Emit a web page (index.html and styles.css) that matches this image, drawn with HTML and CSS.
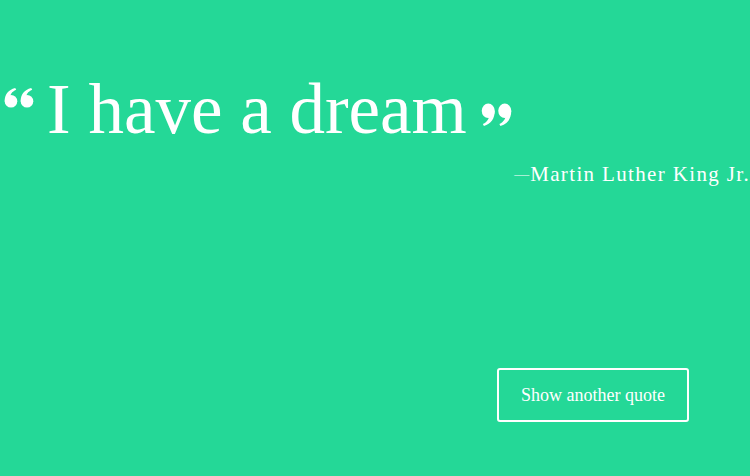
FILE: index.html
```html
<!DOCTYPE html>
<html lang="en">
<head>
<meta charset="utf-8">
<title>Random Quote</title>
<link rel="stylesheet" href="styles.css">
</head>
<body>
<main class="quote-box">
  <h1 class="quote">
    <svg class="mark mark-open" width="30" height="20" viewBox="0 0 30 20" aria-hidden="true">
      <g fill="#fff">
        <circle cx="7" cy="13.2" r="6.3"/>
        <path d="M0.7,13.2 C0.7,6.5 4.2,1.8 11.2,0 L12.2,1.8 C7.8,3.6 5.8,7 6,10.5 Z"/>
        <circle cx="23" cy="13.2" r="6.3"/>
        <path d="M16.7,13.2 C16.7,6.5 20.2,1.8 27.2,0 L28.2,1.8 C23.8,3.6 21.8,7 22,10.5 Z"/>
      </g>
    </svg>
    <span class="quote-text">I have a dream</span>
    <svg class="mark mark-close" width="31" height="23" viewBox="0 0 30 20" preserveAspectRatio="none" aria-hidden="true">
      <g fill="#fff" transform="rotate(180 15 10)">
        <circle cx="7" cy="13.2" r="6.3"/>
        <path d="M0.7,13.2 C0.7,6.5 4.2,1.8 11.2,0 L12.2,1.8 C7.8,3.6 5.8,7 6,10.5 Z"/>
        <circle cx="23" cy="13.2" r="6.3"/>
        <path d="M16.7,13.2 C16.7,6.5 20.2,1.8 27.2,0 L28.2,1.8 C23.8,3.6 21.8,7 22,10.5 Z"/>
      </g>
    </svg>
  </h1>
  <p class="author"><span class="dash">—</span>Martin Luther King Jr.</p>
  <div class="actions">
    <button class="btn" type="button">Show another quote</button>
  </div>
</main>
</body>
</html>
```
FILE: styles.css
```css
html, body {
  margin: 0;
  padding: 0;
}
body {
  background: #24d897;
  color: #ffffff;
  font-family: "Liberation Serif", "DejaVu Serif", serif;
  width: 750px;
  height: 476px;
  overflow: hidden;
}
.quote-box {
  padding: 74px 0 0 4px;
}
.quote {
  margin: 0;
  display: flex;
  align-items: flex-start;
  font-weight: normal;
  font-size: 71px;
  line-height: 71px;
}
.mark {
  display: block;
  flex: none;
}
.mark-open {
  margin-top: 14px;
}
.quote-text {
  margin: 0 14px 0 13px;
  white-space: nowrap;
}
.mark-close {
  margin-top: 29px;
}
.author {
  margin: 17px 0 0;
  text-align: right;
  font-size: 21px;
  line-height: 24px;
  height: 24px;
  letter-spacing: 1.35px;
  white-space: nowrap;
}
.dash {
  font-size: 15px;
  line-height: 0;
  letter-spacing: 1px;
  vertical-align: 2px;
}
.actions {
  display: flex;
  justify-content: flex-end;
  padding-right: 61px;
  margin-top: 182px;
}
.btn {
  box-sizing: border-box;
  height: 54px;
  width: 192px;
  padding: 0;
  background: transparent;
  border: 2px solid #ffffff;
  border-radius: 3px;
  color: #ffffff;
  font-family: "Liberation Serif", "DejaVu Serif", serif;
  font-size: 18px;
  line-height: 20px;
}
```
